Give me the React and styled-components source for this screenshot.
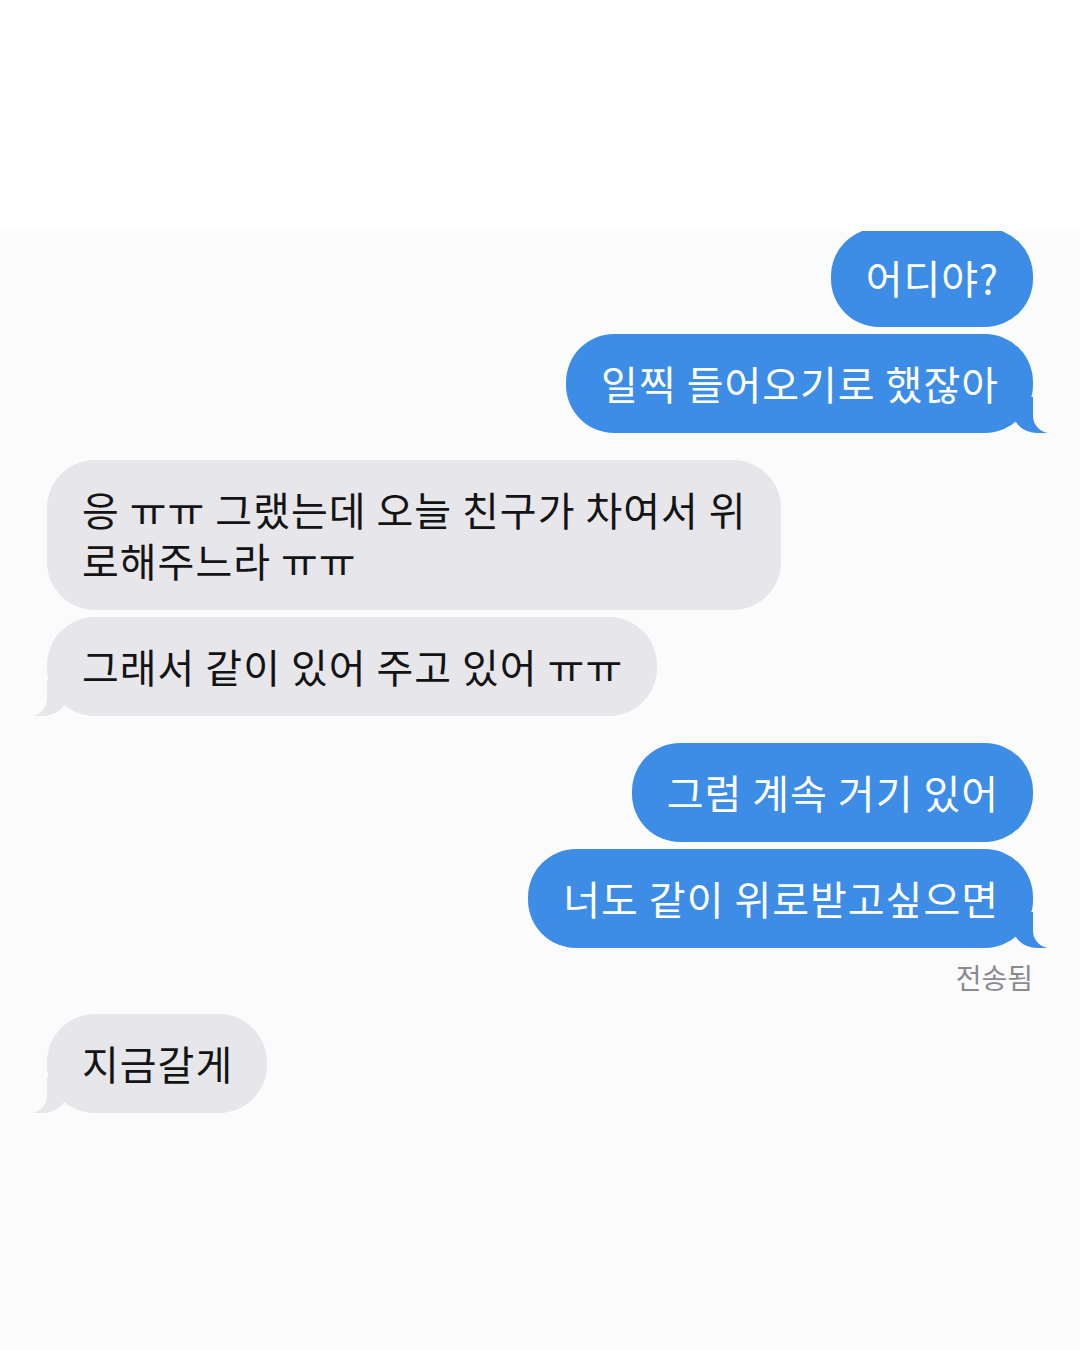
import React from 'react'
import styled, { createGlobalStyle } from 'styled-components'

const BLUE = '#3d8de7'
const GREY = '#e6e6eb'
const PHOTO_BG = '#fbfbfb'

const GlobalStyle = createGlobalStyle`
  html, body {
    margin: 0;
    padding: 0;
    background: #ffffff;
  }
  body {
    font-family: "Noto Sans CJK KR", "Noto Sans", sans-serif;
  }
`

const Page = styled.div`
  width: 1080px;
  height: 1350px;
  display: flex;
  flex-direction: column;
  background: #ffffff;
  overflow: hidden;
`

const TopSpace = styled.div`
  height: 231px;
  flex-shrink: 0;
`

const Photo = styled.div`
  flex: 1;
  background: ${PHOTO_BG};
  overflow: hidden;
  display: flex;
  flex-direction: column;
  padding: 0 47px;
`

const Group = styled.div`
  display: flex;
  flex-direction: column;
  align-items: ${(p) => (p.$me ? 'flex-end' : 'flex-start')};
  gap: 7px;
  margin-top: ${(p) => p.$top ?? 27}px;
`

const Bubble = styled.div`
  position: relative;
  box-sizing: border-box;
  padding: 24px 34px 24px 35px;
  border-radius: 48px;
  background: ${(p) => (p.$me ? BLUE : GREY)};
  color: ${(p) => (p.$me ? '#ffffff' : '#141414')};
  font-size: 40px;
  line-height: 51px;
  letter-spacing: 1px;
  white-space: pre-line;

  ${(p) =>
    p.$tail &&
    (p.$me
      ? `
    &::before {
      content: '';
      position: absolute;
      bottom: 0;
      right: -14px;
      width: 36px;
      height: 36px;
      background: ${BLUE};
      border-bottom-left-radius: 26px;
    }
    &::after {
      content: '';
      position: absolute;
      bottom: 0;
      right: -18px;
      width: 18px;
      height: 36px;
      background: ${PHOTO_BG};
      border-bottom-left-radius: 17px;
    }
  `
      : `
    &::before {
      content: '';
      position: absolute;
      bottom: 0;
      left: -14px;
      width: 36px;
      height: 36px;
      background: ${GREY};
      border-bottom-right-radius: 26px;
    }
    &::after {
      content: '';
      position: absolute;
      bottom: 0;
      left: -18px;
      width: 18px;
      height: 36px;
      background: ${PHOTO_BG};
      border-bottom-right-radius: 17px;
    }
  `)}
`

const Receipt = styled.div`
  align-self: flex-end;
  margin-top: 10px;
  font-size: 28px;
  line-height: 38px;
  letter-spacing: 0;
  color: #8a8a8f;
`

const thread = [
  { me: true, top: -3, lines: ['어디야?', '일찍 들어오기로 했잖아'] },
  { me: false, lines: ['응 ㅠㅠ 그랬는데 오늘 친구가 차여서 위\n로해주느라 ㅠㅠ', '그래서 같이 있어 주고 있어 ㅠㅠ'] },
  { me: true, lines: ['그럼 계속 거기 있어', '너도 같이 위로받고싶으면'], receipt: '전송됨' },
  { me: false, top: 18, lines: ['지금갈게'] },
]

export default function App() {
  return (
    <>
      <GlobalStyle />
      <Page>
        <TopSpace />
        <Photo>
          {thread.map((g, i) => (
            <React.Fragment key={i}>
              <Group $me={g.me} $top={g.top}>
                {g.lines.map((t, j) => (
                  <Bubble key={j} $me={g.me} $tail={j === g.lines.length - 1}>
                    {t}
                  </Bubble>
                ))}
              </Group>
              {g.receipt && <Receipt>{g.receipt}</Receipt>}
            </React.Fragment>
          ))}
        </Photo>
      </Page>
    </>
  )
}
